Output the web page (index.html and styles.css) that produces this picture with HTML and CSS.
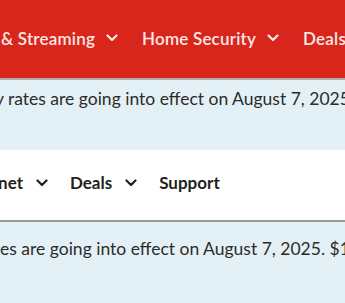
FILE: index.html
```html
<!DOCTYPE html>
<html lang="en">
<head>
    <meta charset="UTF-8">
    <meta name="viewport" content="width=device-width, initial-scale=1.0">
    <title>Rates notice</title>
    <link rel="stylesheet" href="styles.css">
</head>
<body>
    <nav class="topnav">
        <div class="topnav-items">
            <a class="nav-link">TV &amp; Streaming <svg class="chev" viewBox="0 0 12 8"><path d="M1.5 1.5 6 6l4.5-4.5"/></svg></a>
            <a class="nav-link">Home Security <svg class="chev" viewBox="0 0 12 8"><path d="M1.5 1.5 6 6l4.5-4.5"/></svg></a>
            <a class="nav-link">Deals</a>
        </div>
    </nav>
    <div class="notice notice-first">
        <p class="notice-text">New daily rates are going into effect on August 7, 2025. $10 per day.</p>
    </div>
    <nav class="subnav">
        <div class="subnav-items">
            <a class="sub-link">Internet <svg class="chev" viewBox="0 0 12 8"><path d="M1.5 1.5 6 6l4.5-4.5"/></svg></a>
            <a class="sub-link">Deals <svg class="chev" viewBox="0 0 12 8"><path d="M1.5 1.5 6 6l4.5-4.5"/></svg></a>
            <a class="sub-link">Support</a>
        </div>
    </nav>
    <div class="notice notice-second">
        <p class="notice-text">New daily rates are going into effect on August 7, 2025. $10 per day.</p>
    </div>
</body>
</html>
```
FILE: styles.css
```css
body {
    margin: 0;
    overflow: hidden;
    font-family: Lato, "Noto Sans", sans-serif;
    background-color: #e3f1f6;
}
.topnav {
    background-color: #d9261c;
    height: 78px;
    border-bottom: 2px solid #b9a9a8;
    display: flex;
    align-items: center;
    overflow: hidden;
}
.topnav-items {
    display: flex;
    gap: 24px;
    margin-left: -25px;
    margin-top: -2px;
    white-space: nowrap;
}
.nav-link {
    display: flex;
    align-items: center;
    gap: 11px;
    color: #fbe9e6;
    font-size: 17px;
    font-weight: 600;
    letter-spacing: 0.2px;
}
.chev {
    width: 12px;
    height: 8px;
    fill: none;
    stroke: currentColor;
    stroke-width: 2.2;
    stroke-linecap: round;
    stroke-linejoin: round;
}
.notice {
    overflow: hidden;
    white-space: nowrap;
}
.notice-first {
    height: 69px;
}
.notice-second {
    height: 80px;
}
.notice-text {
    margin: 0;
    color: #2b2b2b;
    font-size: 17.5px;
}
.notice-first .notice-text {
    padding-top: 8px;
    margin-left: -72px;
}
.notice-second .notice-text {
    padding-top: 16px;
    margin-left: -101px;
}
.subnav {
    background-color: #fff;
    height: 70px;
    border-top: 1px solid #e9f0f2;
    border-bottom: 2px solid #9a9a9a;
    display: flex;
    align-items: flex-start;
    overflow: hidden;
}
.subnav-items {
    display: flex;
    gap: 22px;
    margin-left: -38px;
    padding-top: 22px;
    white-space: nowrap;
}
.sub-link {
    display: flex;
    align-items: center;
    gap: 13px;
    color: #231f20;
    font-size: 17px;
    font-weight: 700;
}
```
